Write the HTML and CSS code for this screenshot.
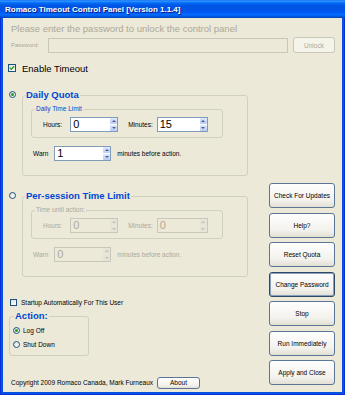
FILE: index.html
```html
<!DOCTYPE html>
<html lang="en">
<head>
    <meta charset="UTF-8">
    <title>Romaco Timeout Control Panel</title>
    <link rel="stylesheet" href="styles.css">
</head>
<body>
    <div class="window">
        <div class="titlebar">Romaco Timeout Control Panel [Version 1.1.4]</div>
        <div class="client">
            <div class="prompt">Please enter the password to unlock the control panel</div>
            <div class="pw-row">
                <span class="pw-label">Password:</span>
                <span class="pw-box"></span>
                <span class="btn btn-disabled unlock">Unlock</span>
            </div>
            <div class="check-row enable">
                <span class="checkbox">
                    <svg width="6" height="6" viewBox="0 0 6 6"><path d="M0.8 2.8 L2.4 4.4 L5.2 1.2" fill="none" stroke="#21a121" stroke-width="1.3"/></svg>
                </span>
                <span class="check-text">Enable Timeout</span>
            </div>

            <div class="main">
                <div class="left">
                    <!-- daily quota -->
                    <div class="mode-row daily">
                        <span class="radio checked"></span>
                        <fieldset class="group">
                            <legend>Daily Quota</legend>
                            <fieldset class="subgroup">
                                <legend>Daily Time Limit</legend>
                                <div class="time-row">
                                    <span class="lbl">Hours:</span>
                                    <span class="spin hours">
                                        <span class="val">0</span>
                                        <span class="arrows"><span class="arr up"></span><span class="arr down"></span></span>
                                    </span>
                                    <span class="lbl minutes-lbl">Minutes:</span>
                                    <span class="spin minutes">
                                        <span class="val">15</span>
                                        <span class="arrows"><span class="arr up"></span><span class="arr down"></span></span>
                                    </span>
                                </div>
                            </fieldset>
                            <div class="warn-row">
                                <span class="lbl">Warn</span>
                                <span class="spin warn">
                                    <span class="val">1</span>
                                    <span class="arrows"><span class="arr up"></span><span class="arr down"></span></span>
                                </span>
                                <span class="lbl after">minutes before action.</span>
                            </div>
                        </fieldset>
                    </div>

                    <!-- per-session -->
                    <div class="mode-row session">
                        <span class="radio"></span>
                        <fieldset class="group off">
                            <legend>Per-session Time Limit</legend>
                            <fieldset class="subgroup">
                                <legend>Time until action:</legend>
                                <div class="time-row">
                                    <span class="lbl">Hours:</span>
                                    <span class="spin hours">
                                        <span class="val">0</span>
                                        <span class="arrows"><span class="arr up"></span><span class="arr down"></span></span>
                                    </span>
                                    <span class="lbl minutes-lbl">Minutes:</span>
                                    <span class="spin minutes">
                                        <span class="val">0</span>
                                        <span class="arrows"><span class="arr up"></span><span class="arr down"></span></span>
                                    </span>
                                </div>
                            </fieldset>
                            <div class="warn-row">
                                <span class="lbl">Warn</span>
                                <span class="spin warn">
                                    <span class="val">0</span>
                                    <span class="arrows"><span class="arr up"></span><span class="arr down"></span></span>
                                </span>
                                <span class="lbl after">minutes before action.</span>
                            </div>
                        </fieldset>
                    </div>

                    <div class="check-row startup">
                        <span class="checkbox small"></span>
                        <span class="check-text">Startup Automatically For This User</span>
                    </div>

                    <fieldset class="action">
                        <legend>Action:</legend>
                        <div class="radio-row"><span class="radio checked"></span><span>Log Off</span></div>
                        <div class="radio-row"><span class="radio"></span><span>Shut Down</span></div>
                    </fieldset>

                    <div class="copyright">
                        <span>Copyright 2009 Romaco Canada, Mark Furneaux</span>
                        <span class="btn about">About</span>
                    </div>
                </div>

                <div class="right">
                    <span class="btn">Check For Updates</span>
                    <span class="btn">Help?</span>
                    <span class="btn">Reset Quota</span>
                    <span class="btn btn-default">Change Password</span>
                    <span class="btn">Stop</span>
                    <span class="btn">Run Immediately</span>
                    <span class="btn">Apply and Close</span>
                </div>
            </div>
        </div>
    </div>
</body>
</html>
```

FILE: styles.css
```css
html, body {
    margin: 0;
    padding: 0;
}
body {
    font-family: "Liberation Sans", Arial, sans-serif;
    font-size: 6.5px;
    color: #000;
    overflow: hidden;
}
.window {
    width: 345px;
    height: 395px;
    display: flex;
    flex-direction: column;
    background: #0553e0;
    box-shadow: inset 1px 0 0 #0831d9, inset -1px 0 0 #0831d9, inset 0 -1px 0 #0831d9;
}
.titlebar {
    flex: none;
    height: 18px;
    display: flex;
    align-items: center;
    padding-left: 5px;
    color: #fff;
    font-weight: bold;
    font-size: 8px;
    text-shadow: 1px 1px 0 #0a1883;
    background: linear-gradient(to bottom, #0058ee 0%, #3593ff 4%, #288eff 8%, #127dff 12%, #036ffc 16%, #0262ee 22%, #0057e5 30%, #0054e3 40%, #0055eb 60%, #005bf5 70%, #026afe 80%, #0062ef 88%, #0052d6 94%, #0040ab 100%);
}
.client {
    flex: 1;
    margin: 0 3px 3px 3px;
    padding-top: 5px;
    background: #ece9d8;
    display: flex;
    flex-direction: column;
}

/* buttons */
.btn {
    flex: none;
    height: 25px;
    box-sizing: border-box;
    border: 1px solid #5c7597;
    border-radius: 3px;
    background: linear-gradient(to bottom, #fefefe, #f3f2ed 70%, #e2dfd3);
    display: flex;
    align-items: center;
    justify-content: center;
}
.btn-default {
    border-color: #2f4866;
    box-shadow: inset 0 0 0 1px #8aa0c2;
}
.btn-disabled {
    border-color: #c9c7ba;
    background: #f5f4ea;
    color: #aca899;
}

/* locked section */
.prompt {
    padding-left: 8px;
    font-size: 9.5px;
    line-height: 12px;
    color: #aca899;
}
.pw-row {
    display: flex;
    align-items: center;
    height: 16px;
    margin-top: 2px;
    padding-left: 8px;
}
.pw-label {
    width: 37px;
    font-size: 6px;
    color: #aca899;
}
.pw-box {
    width: 240px;
    height: 15px;
    box-sizing: border-box;
    border: 1px solid #c9c7ba;
    background: #ece9d8;
}
.btn.unlock {
    width: 42px;
    height: 16px;
    margin-left: 5px;
}

/* checkboxes and radios */
.check-row {
    display: flex;
    align-items: center;
}
.enable {
    height: 12px;
    margin-top: 9px;
    padding-left: 5px;
    font-size: 9.5px;
}
.enable .check-text {
    margin-left: 6px;
}
.checkbox {
    width: 8px;
    height: 8px;
    box-sizing: border-box;
    border: 1px solid #1c5180;
    background: linear-gradient(135deg, #dcdcd7, #fff);
    display: flex;
    align-items: center;
    justify-content: center;
}
.checkbox.small {
    width: 7px;
    height: 7px;
}
.radio {
    flex: none;
    width: 7px;
    height: 7px;
    box-sizing: border-box;
    border: 1px solid #1c5180;
    border-radius: 50%;
    background: linear-gradient(135deg, #dcdcd7, #fff);
    display: flex;
    align-items: center;
    justify-content: center;
}
.radio.checked::after {
    content: '';
    width: 3px;
    height: 3px;
    border-radius: 50%;
    background: #21a121;
}

/* main area */
.main {
    flex: 1;
    display: flex;
}
.left {
    width: 239px;
    margin-left: 6px;
    padding-bottom: 3px;
    display: flex;
    flex-direction: column;
}
.right {
    width: 66px;
    margin-left: 21px;
    padding-bottom: 7px;
    display: flex;
    flex-direction: column;
    justify-content: flex-end;
    gap: 4.5px;
}

.mode-row {
    display: flex;
    align-items: flex-start;
}
.mode-row .radio {
    margin-top: 2px;
    margin-right: 6px;
}
.daily {
    margin-top: 15px;
}
.session {
    margin-top: 14px;
}

fieldset {
    margin: 0;
    min-width: 0;
    box-sizing: border-box;
    border: 1px solid #d0d0bf;
    border-radius: 3px;
}
.group {
    width: 226px;
    padding: 4px 0 14px 8px;
}
.group > legend {
    margin-left: -6px;
    padding: 0 1px;
    font-size: 9.5px;
    line-height: 12px;
    font-weight: bold;
    color: #0046d5;
}
.subgroup {
    width: 192px;
    padding: 4px 0 5px 11px;
}
.subgroup > legend {
    margin-left: -8px;
    padding: 0 1px;
    font-size: 6.5px;
    line-height: 8px;
    color: #0046d5;
}
.off .subgroup > legend,
.off .lbl {
    color: #aca899;
}

.time-row,
.warn-row {
    display: flex;
    align-items: center;
    height: 15px;
}
.time-row .lbl {
    margin-right: 8px;
}
.time-row .minutes-lbl {
    margin-left: 10px;
    margin-right: 4px;
}
.warn-row {
    margin-top: 8px;
    padding-left: 2px;
}
.warn-row .lbl {
    margin-right: 6px;
}
.warn-row .after {
    margin-left: 6px;
}

/* spin boxes */
.spin {
    height: 15px;
    box-sizing: border-box;
    border: 1px solid #7f9db9;
    background: #fff;
    display: flex;
}
.spin.hours { width: 48px; }
.spin.minutes { width: 51px; }
.spin.warn { width: 57px; }
.spin .val {
    flex: 1;
    padding-left: 2px;
    font-size: 11px;
    line-height: 13px;
}
.spin .arrows {
    width: 7px;
    display: flex;
    flex-direction: column;
    gap: 1px;
    padding: 0 0 0 1px;
}
.arr {
    flex: 1;
    border-radius: 1px;
    background: linear-gradient(to bottom, #dfe8fd, #b8cbf6);
    display: flex;
    align-items: center;
    justify-content: center;
}
.arr::after {
    content: '';
    width: 0;
    height: 0;
    border-left: 2px solid transparent;
    border-right: 2px solid transparent;
}
.arr.up::after {
    border-bottom: 2px solid #4d6185;
}
.arr.down::after {
    border-top: 2px solid #4d6185;
}
.off .spin {
    border-color: #c9c7ba;
    background: #ece9d8;
}
.off .spin .val {
    color: #aca899;
}
.off .arr {
    background: #e6e4da;
}
.off .arr.up::after {
    border-bottom-color: #c2bfb0;
}
.off .arr.down::after {
    border-top-color: #c2bfb0;
}

/* lower left */
.startup {
    height: 10px;
    margin-top: 20px;
    padding-left: 1px;
}
.startup .check-text {
    margin-left: 4px;
}
.action {
    width: 80px;
    margin-top: 3px;
    padding: 3px 0 6px 3px;
}
.action > legend {
    margin-left: 1px;
    padding: 0 1px;
    font-size: 9.5px;
    line-height: 12px;
    font-weight: bold;
    color: #0046d5;
}
.radio-row {
    height: 10px;
    display: flex;
    align-items: center;
}
.radio-row + .radio-row {
    margin-top: 4px;
}
.radio-row .radio {
    margin-right: 3px;
}
.copyright {
    margin-top: auto;
    height: 13px;
    padding-left: 2px;
    display: flex;
    align-items: center;
}
.btn.about {
    width: 43px;
    height: 12px;
    margin-left: 4px;
}
```
